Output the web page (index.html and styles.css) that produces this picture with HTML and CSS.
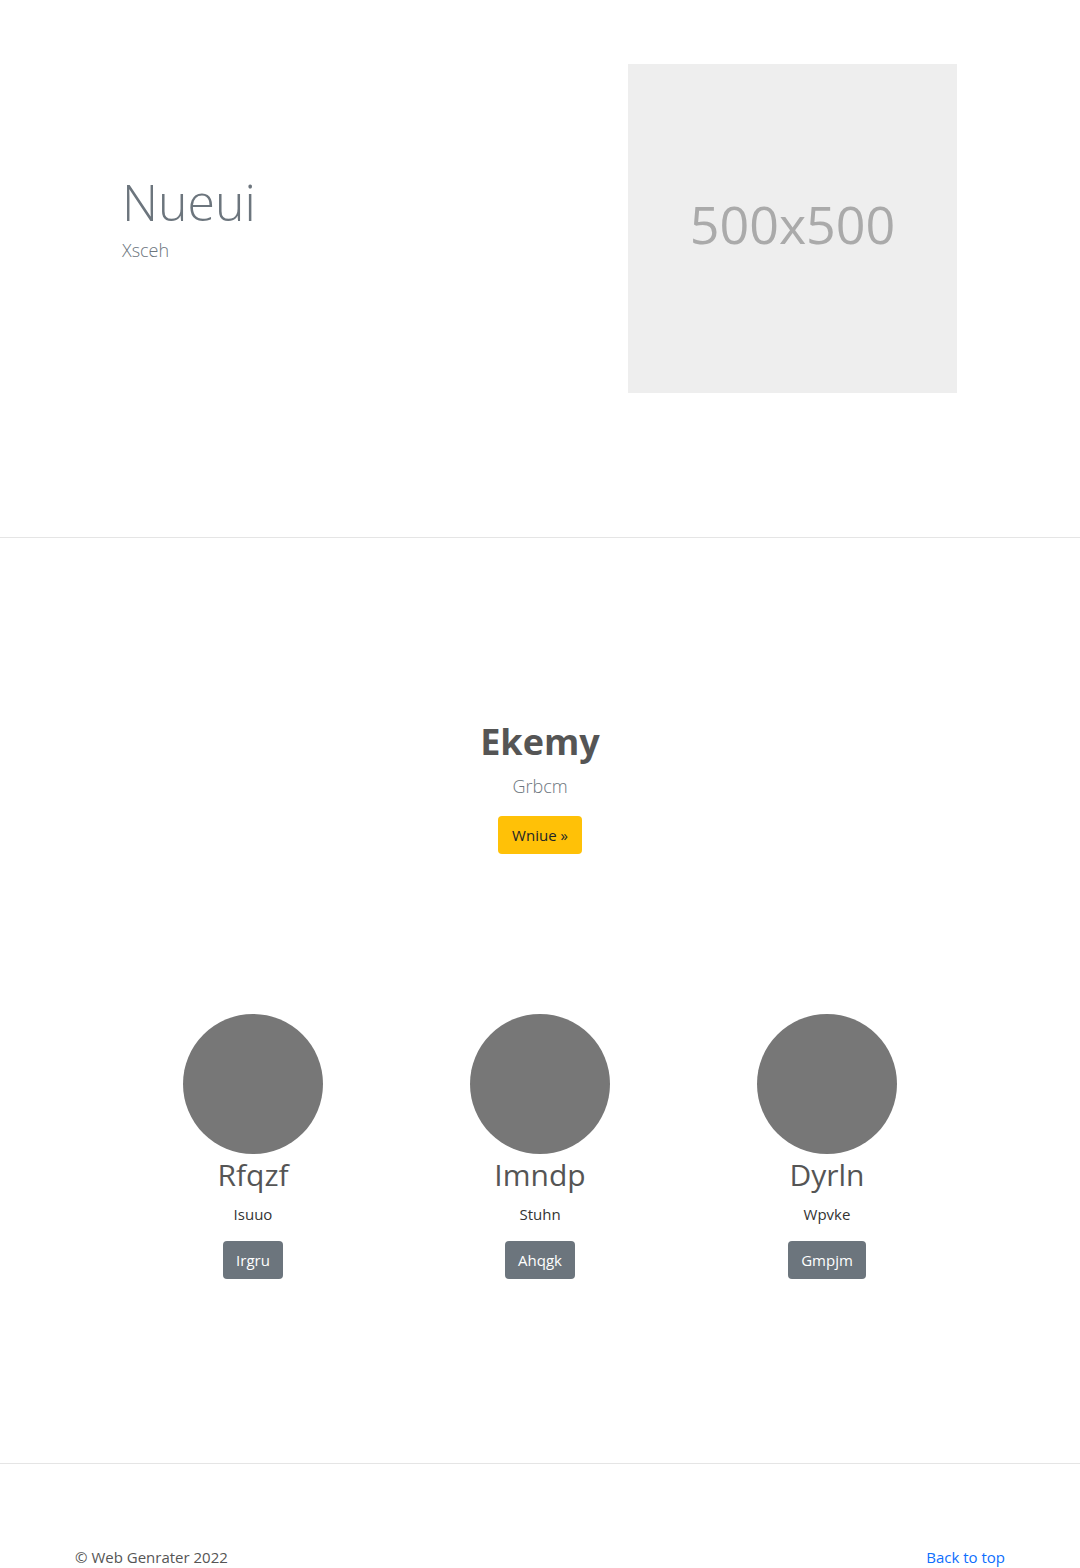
FILE: index.html
```html
<!DOCTYPE html>
<html lang="en">
<head>
<meta charset="utf-8">
<title>Web Genrater</title>
<link rel="stylesheet" href="styles.css">
</head>
<body>
<section class="hero">
  <div class="container hero-row">
    <div class="hero-text">
      <h1 class="display">Nueui</h1>
      <p class="lead">Xsceh</p>
    </div>
    <div class="hero-media">
      <div class="placeholder">500x500</div>
    </div>
  </div>
</section>

<section class="features">
  <div class="container">
    <div class="intro">
      <h2 class="intro-title">Ekemy</h2>
      <p class="intro-lead">Grbcm</p>
      <a class="btn btn-warning" href="#">Wniue »</a>
    </div>
    <div class="people">
      <div class="person">
        <div class="avatar"></div>
        <h3 class="person-name">Rfqzf</h3>
        <p class="person-text">Isuuo</p>
        <a class="btn btn-secondary" href="#">Irgru</a>
      </div>
      <div class="person">
        <div class="avatar"></div>
        <h3 class="person-name">Imndp</h3>
        <p class="person-text">Stuhn</p>
        <a class="btn btn-secondary" href="#">Ahqgk</a>
      </div>
      <div class="person">
        <div class="avatar"></div>
        <h3 class="person-name">Dyrln</h3>
        <p class="person-text">Wpvke</p>
        <a class="btn btn-secondary" href="#">Gmpjm</a>
      </div>
    </div>
  </div>
</section>

<footer class="footer">
  <div class="container footer-row">
    <p class="copy">© Web Genrater 2022</p>
    <a class="top-link" href="#">Back to top</a>
  </div>
</footer>
</body>
</html>
```

FILE: styles.css
```css
* { box-sizing: border-box; }

html, body {
  margin: 0;
  padding: 0;
}

body {
  font-family: "Open Sans", "Noto Sans", "Liberation Sans", sans-serif;
  font-size: 15px;
  line-height: 1.5;
  color: #212529;
  background: #fff;
}

.container {
  width: 936px;
  margin: 0 auto;
}

/* Hero */
.hero {
  padding: 64px 0 144px;
  border-bottom: 1px solid #e5e5e5;
}

.hero-row {
  display: flex;
  align-items: center;
}

.hero-text {
  flex: 0 0 468px;
  padding-left: 50px;
  padding-bottom: 21px;
}

.display {
  margin: 0 0 5px;
  font-size: 50px;
  font-weight: 300;
  line-height: 1.2;
  color: #6c757d;
}

.lead {
  margin: 0;
  font-size: 18px;
  font-weight: 300;
  color: #6c757d;
}

.hero-media {
  flex: 1;
  padding-left: 88px;
}

.placeholder {
  width: 329px;
  height: 329px;
  background: #eeeeee;
  color: #aaaaaa;
  font-size: 52px;
  display: flex;
  align-items: center;
  justify-content: center;
  padding-bottom: 10px;
}

/* Features */
.features {
  padding: 182px 0 184px;
  border-bottom: 1px solid #e5e5e5;
}

.intro {
  text-align: center;
}

.intro-title {
  margin: 0;
  font-size: 36px;
  font-weight: 700;
  line-height: 1.2;
  color: #555555;
}

.intro-lead {
  margin: 10px 0 16px;
  font-size: 18px;
  font-weight: 300;
  color: #6c757d;
}

.btn {
  display: inline-block;
  padding: 6px 13px;
  font-size: 15px;
  line-height: 26px;
  border-radius: 4px;
  text-decoration: none;
}

.btn-warning {
  background: #ffc107;
  color: #212529;
  padding: 6px 14px;
}

.btn-secondary {
  background: #6c757d;
  color: #ffffff;
}

.people {
  margin-top: 160px;
  display: grid;
  grid-template-columns: repeat(3, 287px);
  justify-content: center;
}

.person {
  display: flex;
  flex-direction: column;
  align-items: center;
}

.avatar {
  width: 140px;
  height: 140px;
  border-radius: 50%;
  background: #777777;
}

.person-name {
  margin: 3px 0 0;
  font-size: 30px;
  font-weight: 400;
  line-height: 1.2;
  color: #555555;
}

.person-text {
  margin: 10px 0 15px;
  font-size: 15px;
  color: #333333;
}

/* Footer */
.footer {
  padding-top: 82px;
}

.footer-row {
  display: flex;
  justify-content: space-between;
  padding: 0 3px;
}

.copy {
  margin: 0;
  font-size: 15px;
  color: #555555;
}

.top-link {
  font-size: 15px;
  color: #0d6efd;
  text-decoration: none;
}
```
